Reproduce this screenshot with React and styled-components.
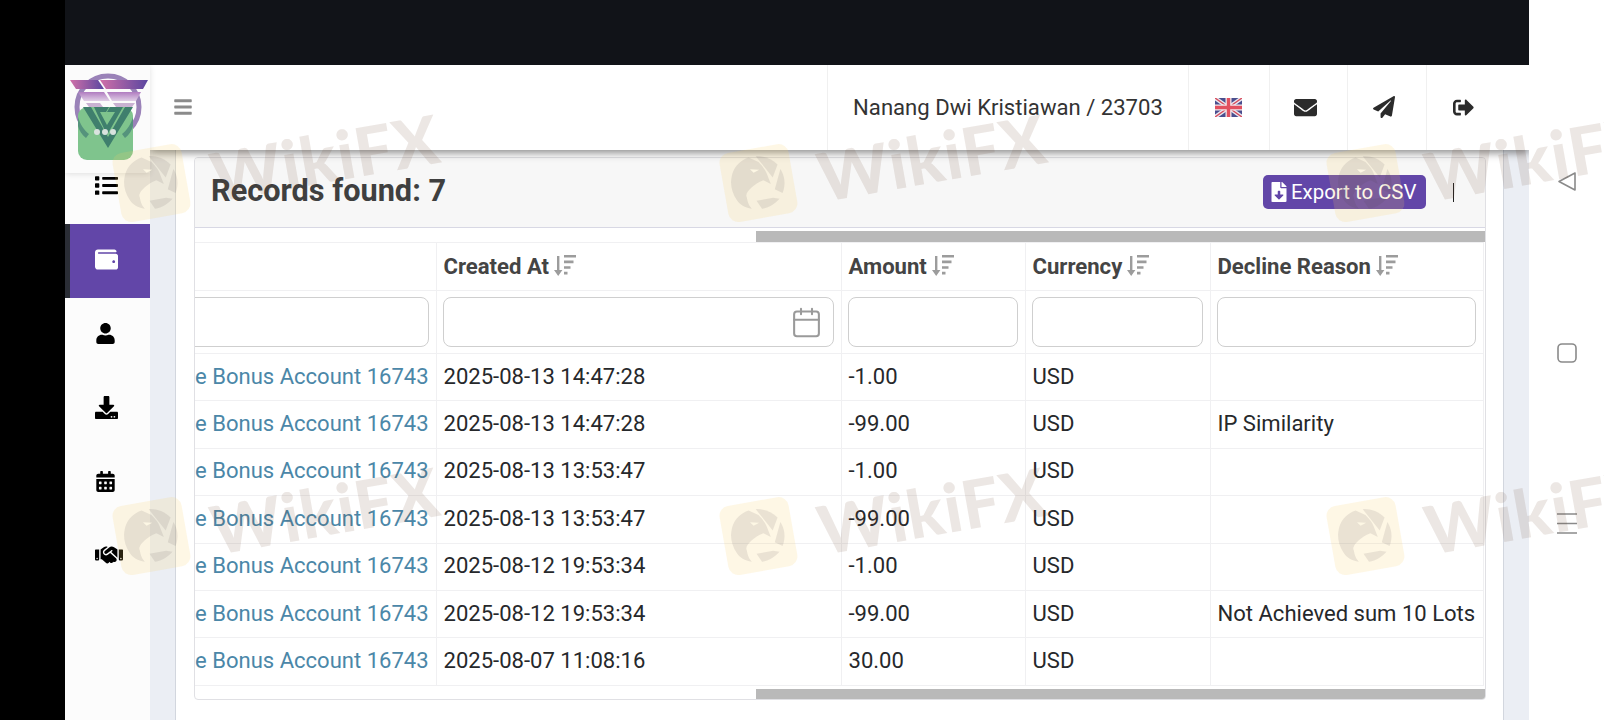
import React from "react"
import styled, { createGlobalStyle } from "styled-components"
import {
  FaBars, FaList, FaWallet, FaUser, FaDownload, FaCalendarAlt,
  FaEnvelope, FaPaperPlane, FaSignOutAlt, FaFileDownload,
} from "react-icons/fa"
import { FaHandshake } from "react-icons/fa6"
import { Calendar } from "lucide-react"

const GlobalStyle = createGlobalStyle`
  html, body { margin: 0; padding: 0; background: #fff; }
  * { box-sizing: border-box; }
  body { font-family: Roboto, "Liberation Sans", sans-serif; color: #26282b; }
`

const Page = styled.div`
  position: relative;
  display: flex;
  width: 1604px;
  height: 720px;
  overflow: hidden;
`
const Letterbox = styled.div`
  width: 65px;
  background: #000;
`
const Screen = styled.div`
  width: 1464px;
  display: flex;
  flex-direction: column;
  overflow: hidden;
`
const StatusBar = styled.div`
  position: relative;
  z-index: 4;
  height: 65px;
  background: #111318;
`
const Body = styled.div`
  flex: 1;
  display: flex;
  min-height: 0;
`

const Sidebar = styled.aside`
  position: relative;
  width: 85px;
  padding-top: 85px;
  background: #fcfcfc;
  z-index: 3;
`
const LogoBox = styled.div`
  position: absolute;
  left: 0;
  top: 0;
  width: 85px;
  height: 108px;
  background: #fbfbfb;
  box-shadow: 0 1px 6px rgba(0, 0, 0, 0.12);
`
const NavItem = styled.div`
  height: 74px;
  display: flex;
  align-items: center;
  padding: 0 0 4px ${(p) => (p.$active ? "25px" : "30px")};
  background: ${(p) => (p.$active ? "#6246a8" : "transparent")};
  border-left: ${(p) => (p.$active ? "5px solid #2a2d35" : "none")};
  color: ${(p) => (p.$active ? "#fff" : "#000")};
`

const Main = styled.div`
  flex: 1;
  display: flex;
  flex-direction: column;
  min-width: 0;
`
const Header = styled.header`
  position: relative;
  z-index: 2;
  height: 85px;
  display: flex;
  align-items: stretch;
  background: #fff;
  box-shadow: 0 3px 8px rgba(0, 0, 0, 0.45);
`
const Burger = styled.div`
  flex: 1;
  display: flex;
  align-items: center;
  padding: 0 0 1px 23px;
  color: #8b8b8b;
`
const HeaderCell = styled.div`
  width: ${(p) => p.$w}px;
  display: flex;
  align-items: center;
  justify-content: center;
  padding: 0 ${(p) => p.$shift || 0}px 1px 0;
  border-left: 1px solid #f0f0f0;
  color: #2b2b2b;
`
const UserName = styled(HeaderCell)`
  font-size: 22.1px;
  color: #333;
`

const Content = styled.div`
  flex: 1;
  min-height: 0;
  padding: 0 25px;
  background: #ebeef4;
`
const Panel = styled.div`
  height: 100%;
  padding: 7px 17px 0 18px;
  background: #fff;
  border-left: 1px solid #d2d6de;
  border-right: 1px solid #d2d6de;
`
const Card = styled.section`
  height: 543px;
  border: 1px solid #e0e0e4;
  border-radius: 4px;
  overflow: hidden;
  background: #fff;
`
const CardHeader = styled.div`
  height: 70px;
  display: flex;
  align-items: center;
  padding: 0 31px 0 16px;
  background: #f7f7f7;
  border-bottom: 1px solid #d8d8e4;
`
const Title = styled.h2`
  flex: 1;
  margin: 0 0 5px;
  font-size: 30.7px;
  font-weight: 700;
  color: #3f3f3f;
`
const ExportButton = styled.button`
  width: 163px;
  height: 34px;
  display: flex;
  align-items: center;
  gap: 2px;
  margin-bottom: 2px;
  padding: 0 0 0 6px;
  border: none;
  border-radius: 5px;
  background: #6246a8;
  color: #fff;
  font: 400 20.4px Roboto, sans-serif;
`
const Caret = styled.span`
  width: 1px;
  height: 19px;
  margin-left: 27px;
  background: #222;
`
const ScrollTrack = styled.div`
  height: ${(p) => p.$h}px;
  padding-top: 3px;
  display: flex;
  justify-content: flex-end;
`
const ScrollThumb = styled.div`
  width: 729px;
  height: 11px;
  background: #b9b9b9;
`

const Table = styled.table`
  width: 1288px;
  table-layout: fixed;
  border-collapse: collapse;
  border-top: 1px solid #f0f0f2;
  border-bottom: 1px solid #f0f0f2;
  font-size: 22.05px;
`
const Th = styled.th`
  height: 48px;
  padding: 0 7px 2px;
  text-align: left;
  font-size: 22.1px;
  font-weight: 700;
  color: #444;
  white-space: nowrap;
  border: 1px solid #f0f0f2;
  border-top: none;
  &:first-child { border-left: none; }
`
const FilterCell = styled.td`
  height: 63px;
  padding: 0 7px 0 6px;
  border: 1px solid #f0f0f2;
  overflow: hidden;
  &:first-child { border-left: none; }
`
const FilterBox = styled.div`
  height: 50px;
  display: flex;
  align-items: center;
  justify-content: flex-end;
  padding-right: 10px;
  margin-left: ${(p) => (p.$clipped ? "-30px" : "0")};
  border: 1px solid #cfcfcf;
  border-radius: 8px;
  background: #fff;
  color: #9a9a9a;
`
const Td = styled.td`
  height: 47.4px;
  padding: 0 7px 2px;
  border: 1px solid #f0f0f2;
  white-space: nowrap;
  overflow: hidden;
  &:first-child { border-left: none; padding-left: 0; text-align: right; }
`
const AccountLink = styled.a`
  color: #4b87a8;
`
const SortGlyph = styled.svg`
  width: 22px;
  height: 21px;
  margin-left: 5px;
  vertical-align: -2px;
  fill: #9c9c9c;
`

const NavRail = styled.div`
  flex: 1;
  display: flex;
  flex-direction: column;
  padding-top: 96px;
  background: #fff;
`
const RailButton = styled.div`
  height: 171px;
  display: flex;
  align-items: center;
  padding-left: 28px;
`

const WatermarkLayer = styled.div`
  position: absolute;
  inset: 0;
  display: grid;
  grid-template-columns: repeat(3, 607px);
  grid-auto-rows: 353px;
  padding: 127px 0 0 119px;
  pointer-events: none;
  z-index: 10;
`
const Watermark = styled.div`
  width: 340px;
  height: 110px;
  display: flex;
  align-items: center;
  gap: 25px;
  transform: rotate(-10deg);
  transform-origin: 40px 70px;
  white-space: nowrap;
`
const WatermarkBadge = styled.div`
  flex: none;
  width: 70px;
  height: 70px;
  display: flex;
  align-items: center;
  justify-content: center;
  border-radius: 10px;
  background: rgba(250, 210, 100, 0.17);
`
const WatermarkText = styled.span`
  margin-top: 8px;
  font: 900 67px Lato, sans-serif;
  letter-spacing: 1px;
  color: rgba(110, 70, 50, 0.13);
`

const rows = [
  ["2025-08-13 14:47:28", "-1.00", ""],
  ["2025-08-13 14:47:28", "-99.00", "IP Similarity"],
  ["2025-08-13 13:53:47", "-1.00", ""],
  ["2025-08-13 13:53:47", "-99.00", ""],
  ["2025-08-12 19:53:34", "-1.00", ""],
  ["2025-08-12 19:53:34", "-99.00", "Not Achieved sum 10 Lots"],
  ["2025-08-07 11:08:16", "30.00", ""],
]

const columns = ["Created At", "Amount", "Currency", "Decline Reason"]

const SortIcon = () => (
  <SortGlyph viewBox="0 0 22 21">
    <path d="M3 1H5.4V15H8.4L4.2 21L0 15H3Z" />
    <path d="M10 0H22V2.6H10ZM10 5.6H19.5V8.2H10ZM10 11.2H16.5V13.8H10ZM10 16.8H13.5V19.4H10Z" />
  </SortGlyph>
)

const Logo = () => (
  <svg width="85" height="108" viewBox="0 0 85 108">
    <defs>
      <linearGradient id="band" x1="0" y1="0" x2="1" y2="0">
        <stop offset="0" stopColor="#d070a8" />
        <stop offset="1" stopColor="#5a46a0" />
      </linearGradient>
      <linearGradient id="fade" x1="0" y1="0" x2="0" y2="1">
        <stop offset="0" stopColor="#b07cc0" />
        <stop offset="1" stopColor="#e0cfe6" />
      </linearGradient>
    </defs>
    <circle cx="43" cy="42" r="31" fill="none" stroke="#9a82b8" strokeWidth="5" />
    <path d="M5 15H33L39 24H11Z" fill="url(#band)" />
    <path d="M35 15H83L78 24H41Z" fill="url(#band)" />
    <path d="M13 27H39L45 36H19Z" fill="url(#fade)" />
    <path d="M42 27H76L71 36H47Z" fill="url(#fade)" />
    <path d="M21 38H35L38 42H24Z" fill="#c9b2d2" />
    <path d="M48 38H70L67 42H51Z" fill="#c9b2d2" />
    <rect x="13" y="42" width="55" height="53" rx="9" fill="#7fc48d" />
    <path d="M18 42H26L43 72L60 42H68L43 83Z" fill="#3f7f6d" />
    <path d="M29 42H44L41 47H35L42 60L50 47H42L45 42H58L42 70Z" fill="#3f7f6d" />
    <path d="M13 52C15 59 19 65 24 69L21 73C17 70 14 65 13 61Z" fill="#55937c" />
    <path d="M68 52C66 59 62 65 57 69L60 73C64 70 67 65 68 61Z" fill="#55937c" />
    <circle cx="32" cy="67" r="3" fill="#d9e3de" />
    <circle cx="40" cy="67" r="3" fill="#d9e3de" />
    <circle cx="48" cy="67" r="3" fill="#d9e3de" />
  </svg>
)

const UkFlag = () => (
  <svg width="27" height="19" viewBox="0 0 27 19">
    <rect width="27" height="19" fill="#4a4e8e" />
    <path d="M0 0L27 19M27 0L0 19" stroke="#e8e8f0" strokeWidth="4" />
    <path d="M0 0L27 19M27 0L0 19" stroke="#d84a5a" strokeWidth="1.4" />
    <path d="M13.5 0V19M0 9.5H27" stroke="#f2e6ea" strokeWidth="6" />
    <path d="M13.5 0V19M0 9.5H27" stroke="#e2505f" strokeWidth="3.4" />
  </svg>
)

const Eagle = () => (
  <svg width="56" height="56" viewBox="0 0 56 56">
    <g fill="rgba(70,60,70,0.11)">
      <path d="M22.7 1L31.6 7.3C35 12 37 16 37.8 20L40 31L33.4 26C28 27 24 29 20.7 31C16 34 13 37 14 40C14 46 15 49 17 52C10 50 6 46 3.7 41C1 35 0 28 1.2 22C3 15 6 9 11.6 5.5C15 3 19 1.5 22.7 1Z" />
      <path d="M30 1C38 2 45 6 50 13L43 25Z" />
      <path d="M52 18C55 25 55 34 50 42L43 37Z" />
      <path d="M46 47C41 51 34 54 27 54L23 45L40 45Z" />
    </g>
    <path d="M22 13L31 15L25 17Z" fill="#fdf7e4" />
  </svg>
)

const BackIcon = () => (
  <svg width="20" height="21" viewBox="0 0 20 21">
    <path d="M18 2V19L2 10.5Z" fill="none" stroke="#8a8a8a" strokeWidth="1.6" strokeLinejoin="round" />
  </svg>
)

const SquareIcon = () => (
  <svg width="20" height="20" viewBox="0 0 20 20">
    <rect x="1" y="1" width="18" height="18" rx="4" fill="none" stroke="#8a8a8a" strokeWidth="1.6" />
  </svg>
)

const MenuIcon = () => (
  <svg width="20" height="21" viewBox="0 0 20 21">
    <path d="M0 1H20M0 10.5H20M0 20H20" stroke="#8a8a8a" strokeWidth="1.4" />
  </svg>
)

const App = () => {
  return (
    <Page>
      <GlobalStyle />
      <Letterbox />
      <Screen>
        <StatusBar />
        <Body>
          <Sidebar>
            <LogoBox><Logo /></LogoBox>
            <NavItem><FaList size={23} /></NavItem>
            <NavItem $active><FaWallet size={23} /></NavItem>
            <NavItem><FaUser size={21} /></NavItem>
            <NavItem><FaDownload size={23} /></NavItem>
            <NavItem><FaCalendarAlt size={21} /></NavItem>
            <NavItem><FaHandshake size={28} /></NavItem>
          </Sidebar>
          <Main>
            <Header>
              <Burger><FaBars size={20} /></Burger>
              <UserName $w={361}>Nanang Dwi Kristiawan / 23703</UserName>
              <HeaderCell $w={81} $shift={2}><UkFlag /></HeaderCell>
              <HeaderCell $w={78} $shift={6}><FaEnvelope size={23} /></HeaderCell>
              <HeaderCell $w={79} $shift={6}><FaPaperPlane size={22} /></HeaderCell>
              <HeaderCell $w={103} $shift={29}><FaSignOutAlt size={21} /></HeaderCell>
            </Header>
            <Content>
              <Panel>
                <Card>
                  <CardHeader>
                    <Title>Records found: 7</Title>
                    <ExportButton><FaFileDownload size={20} />Export to CSV</ExportButton>
                    <Caret />
                  </CardHeader>
                  <ScrollTrack $h={14}><ScrollThumb /></ScrollTrack>
                  <Table>
                    <colgroup>
                      <col width="241" />
                      <col width="405" />
                      <col width="184" />
                      <col width="185" />
                      <col width="273" />
                    </colgroup>
                    <thead>
                      <tr>
                        <Th />
                        {columns.map((c) => (
                          <Th key={c}>{c}<SortIcon /></Th>
                        ))}
                      </tr>
                      <tr>
                        <FilterCell><FilterBox $clipped /></FilterCell>
                        <FilterCell><FilterBox><Calendar size={33} strokeWidth={1.5} /></FilterBox></FilterCell>
                        <FilterCell><FilterBox /></FilterCell>
                        <FilterCell><FilterBox /></FilterCell>
                        <FilterCell><FilterBox /></FilterCell>
                      </tr>
                    </thead>
                    <tbody>
                      {rows.map((r, i) => (
                        <tr key={i}>
                          <Td><AccountLink>e Bonus Account 16743</AccountLink></Td>
                          <Td>{r[0]}</Td>
                          <Td>{r[1]}</Td>
                          <Td>USD</Td>
                          <Td>{r[2]}</Td>
                        </tr>
                      ))}
                    </tbody>
                  </Table>
                  <ScrollTrack $h={14}><ScrollThumb /></ScrollTrack>
                </Card>
              </Panel>
            </Content>
          </Main>
        </Body>
      </Screen>
      <NavRail>
        <RailButton><BackIcon /></RailButton>
        <RailButton><SquareIcon /></RailButton>
        <RailButton><MenuIcon /></RailButton>
      </NavRail>
      <WatermarkLayer>
        {Array.from({ length: 6 }).map((_, i) => (
          <Watermark key={i}>
            <WatermarkBadge><Eagle /></WatermarkBadge>
            <WatermarkText>WikiFX</WatermarkText>
          </Watermark>
        ))}
      </WatermarkLayer>
    </Page>
  )
}

export default App
